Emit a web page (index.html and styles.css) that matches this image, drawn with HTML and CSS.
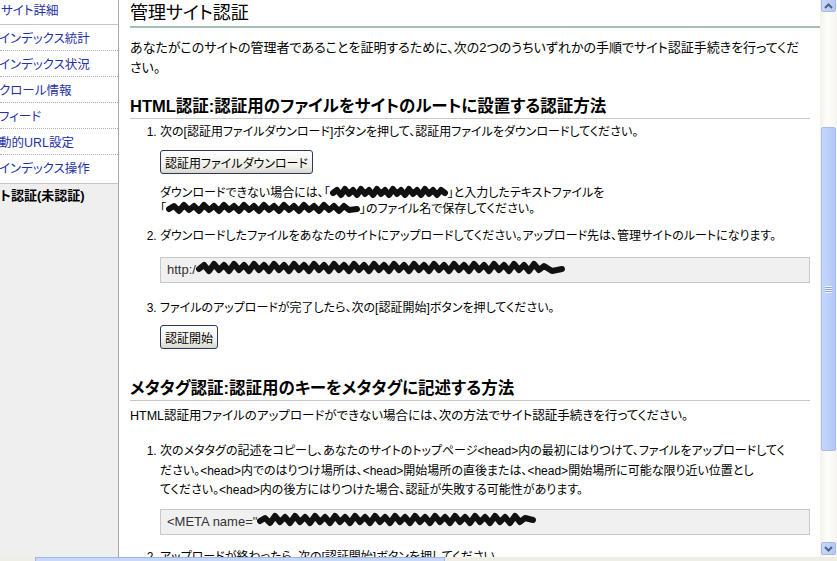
FILE: index.html
```html
<!DOCTYPE html>
<html lang="ja">
<head>
    <meta charset="UTF-8">
    <title>管理サイト認証</title>
    <link rel="stylesheet" href="styles.css">
</head>
<body>
    <div class="window">
        <div class="viewport">
            <aside class="sidebar">
                <ul class="nav">
                    <li class="nav-item first"><a href="#">サイト詳細</a></li>
                    <li class="nav-item"><a href="#">インデックス統計</a></li>
                    <li class="nav-item"><a href="#">インデックス状況</a></li>
                    <li class="nav-item"><a href="#">クロール情報</a></li>
                    <li class="nav-item"><a href="#">フィード</a></li>
                    <li class="nav-item"><a href="#">動的URL設定</a></li>
                    <li class="nav-item last"><a href="#">インデックス操作</a></li>
                    <li class="nav-item current">ト認証(未認証)</li>
                </ul>
            </aside>

            <main class="content">
                <h1 class="page-title">管理サイト認証</h1>
                <p class="intro">あなたがこのサイトの管理者であることを証明するために、次の2つのうちいずれかの手順でサイト認証手続きを行ってください。</p>

                <section class="method">
                    <h2 class="method-title">HTML認証:認証用のファイルをサイトのルートに設置する認証方法</h2>
                    <ol class="steps html-steps">
                        <li class="step">
                            次の[認証用ファイルダウンロード]ボタンを押して、認証用ファイルをダウンロードしてください。
                            <div class="step-action"><button class="xp-button">認証用ファイルダウンロード</button></div>
                            <p class="note">ダウンロードできない場合には、「<svg class="scribble" width="118" height="14" viewBox="0 0 118 14"><path d="M3 8 L7 5 L11 10 L15 4 L19 9 L23 5 L27 10 L31 4 L35 9 L39 5 L43 10 L47 4 L51 9 L55 5 L59 10 L63 4 L67 9 L71 5 L75 10 L79 4 L83 9 L87 5 L91 10 L95 4 L99 9 L103 5 L107 10 L111 5 L115 8" /></svg>」と入力したテキストファイルを<br>「<svg class="scribble" width="194" height="14" viewBox="0 0 194 14"><path d="M3 8 L8 5 L13 10 L18 4 L23 9 L28 5 L33 10 L38 4 L43 9 L48 5 L53 10 L58 4 L63 9 L68 5 L73 10 L78 4 L83 9 L88 5 L93 10 L98 4 L103 9 L108 5 L113 10 L118 4 L123 9 L128 5 L133 10 L138 4 L143 9 L148 5 L153 10 L158 4 L163 9 L168 5 L173 10 L178 5 L183 9 L191 8" /></svg>」のファイル名で保存してください。</p>
                        </li>
                        <li class="step">
                            ダウンロードしたファイルをあなたのサイトにアップロードしてください。アップロード先は、管理サイトのルートになります。
                            <div class="code-box">http:/<svg class="scribble" width="370" height="16" viewBox="0 0 370 16"><path d="M3 9 L8 5 L13 11 L18 4 L23 10 L28 5 L33 11 L38 4 L43 10 L48 5 L53 11 L58 4 L63 10 L68 5 L73 11 L78 4 L83 10 L88 5 L93 11 L98 4 L103 10 L108 5 L113 11 L118 4 L123 10 L128 5 L133 11 L138 4 L143 10 L148 5 L153 11 L158 4 L163 10 L168 5 L173 11 L178 4 L183 10 L188 5 L193 11 L198 4 L203 10 L208 5 L213 11 L218 4 L223 10 L228 5 L233 11 L238 4 L243 10 L248 5 L253 11 L258 4 L263 10 L268 5 L273 11 L278 4 L283 10 L288 5 L293 11 L298 4 L303 10 L308 5 L313 11 L318 4 L323 10 L328 5 L333 11 L338 4 L343 10 L348 6 L356 11 L366 9" /></svg></div>
                        </li>
                        <li class="step step-last">
                            ファイルのアップロードが完了したら、次の[認証開始]ボタンを押してください。
                            <div class="step-action tight"><button class="xp-button">認証開始</button></div>
                        </li>
                    </ol>
                </section>

                <section class="method">
                    <h2 class="method-title meta">メタタグ認証:認証用のキーをメタタグに記述する方法</h2>
                    <p class="lead">HTML認証用ファイルのアップロードができない場合には、次の方法でサイト認証手続きを行ってください。</p>
                    <ol class="steps meta-steps">
                        <li class="step long">
                            <p class="step-text">次のメタタグの記述をコピーし、あなたのサイトのトップページ&lt;head&gt;内の最初にはりつけて、ファイルをアップロードしてください。&lt;head&gt;内でのはりつけ場所は、&lt;head&gt;開始場所の直後または、&lt;head&gt;開始場所に可能な限り近い位置とし<br>てください。&lt;head&gt;内の後方にはりつけた場合、認証が失敗する可能性があります。</p>
                            <div class="code-box meta-box">&lt;META name="<svg class="scribble" width="280" height="16" viewBox="0 0 280 16"><path d="M3 9 L8 6 L13 11 L18 4 L23 10 L28 5 L33 11 L38 4 L43 10 L48 5 L53 11 L58 4 L63 10 L68 5 L73 11 L78 4 L83 10 L88 5 L93 11 L98 4 L103 10 L108 5 L113 11 L118 4 L123 10 L128 5 L133 11 L138 4 L143 10 L148 5 L153 11 L158 4 L163 10 L168 5 L173 11 L178 4 L183 10 L188 5 L193 11 L198 4 L203 10 L208 5 L213 11 L218 4 L223 10 L228 5 L233 11 L238 4 L243 10 L248 5 L253 11 L258 4 L263 10 L268 6 L276 8" /></svg></div>
                        </li>
                        <li class="step">アップロードが終わったら、次の[認証開始]ボタンを押してください。</li>
                    </ol>
                </section>
            </main>

            <div class="vscroll">
                <div class="arrow up"><svg width="9" height="6" viewBox="0 0 9 6"><path d="M1 5 L4.5 1.5 L8 5" /></svg></div>
                <div class="track">
                    <div class="thumb"><span class="grip"></span></div>
                </div>
                <div class="arrow down"><svg width="9" height="6" viewBox="0 0 9 6"><path d="M1 1 L4.5 4.5 L8 1" /></svg></div>
            </div>
        </div>
        <div class="hscroll"><div class="hthumb"></div></div>
    </div>
</body>
</html>
```

FILE: styles.css
```css
* {
    margin: 0;
    padding: 0;
    box-sizing: border-box;
}

body {
    width: 837px;
    height: 561px;
    overflow: hidden;
    background: #ffffff;
    color: #000000;
    font-family: "Liberation Sans", "Noto Sans CJK JP", sans-serif;
    font-size: 13px;
    font-feature-settings: "palt";
}

.window {
    display: flex;
    flex-direction: column;
    height: 561px;
}

.viewport {
    display: flex;
    height: 557px;
    overflow: hidden;
}

/* left navigation */
.sidebar {
    width: 119px;
    flex: none;
    background: #efefef;
    border-right: 1px solid #a8a8a8;
    overflow: hidden;
    font-size: 12.5px;
}

.nav {
    list-style: none;
}

.nav-item {
    background: #ffffff;
    height: 26px;
    line-height: 18px;
    padding-top: 5px;
    border-bottom: 1px dotted #b0b0b0;
    white-space: nowrap;
    text-indent: -1px;
}

.nav-item.first {
    height: 25px;
    padding-top: 2px;
    text-indent: 1px;
    border-bottom: 1px solid #c4c4c4;
}

.nav-item.last {
    height: 28px;
    border-bottom: none;
}

.nav-item a {
    color: #2530a8;
    text-decoration: none;
}

.nav-item.current {
    background: #efefef;
    border-top: 1px solid #c4c4c4;
    border-bottom: none;
    font-weight: bold;
    font-size: 13px;
    padding-top: 3px;
    text-indent: 0;
}

/* main content */
.content {
    flex: 1;
    padding-left: 11px;
    overflow: hidden;
}

.page-title {
    font-size: 18px;
    font-weight: normal;
    line-height: 24px;
    padding-top: 1px;
    padding-bottom: 1px;
    border-bottom: 2px solid #a9bfb6;
}

.intro {
    margin-top: 10px;
    margin-right: 16px;
    line-height: 20px;
}

.method {
    margin-right: 10px;
}

.method-title {
    font-size: 16.5px;
    font-weight: bold;
    line-height: 22px;
    margin-top: 17px;
    padding-bottom: 1px;
    border-bottom: 1px solid #c8c8c8;
}

.method-title.meta {
    margin-top: 28px;
}

.steps {
    padding-left: 30px;
}

.step {
    font-size: 12px;
    line-height: 18px;
    margin-top: 10px;
}

.html-steps {
    margin-top: 4px;
}

.html-steps .step:first-child {
    margin-top: 0;
}

.step-last {
    margin-top: 16px;
}

.step-action {
    margin-top: 9px;
}

.step-action.tight {
    margin-top: 8px;
}

.xp-button {
    font-family: inherit;
    font-size: 12px;
    font-feature-settings: "palt";
    height: 24px;
    padding: 0 4px;
    color: #000000;
    background: linear-gradient(#ffffff, #f0efe8 70%, #d8d6cc);
    border: 1px solid #2a3a5c;
    border-radius: 3px;
}

.note {
    margin-top: 11px;
    line-height: 16px;
}

.scribble {
    vertical-align: -2px;
}

.scribble path {
    fill: none;
    stroke: #111111;
    stroke-width: 6;
    stroke-linejoin: round;
    stroke-linecap: round;
}

.code-box {
    margin-top: 12px;
    height: 26px;
    line-height: 24px;
    padding-left: 6px;
    font-size: 13px;
    background: #f0f0f0;
    border: 1px solid #c8c8c8;
    color: #333333;
    white-space: nowrap;
    overflow: hidden;
}

.meta-box {
    margin-top: 8px;
}

.lead {
    margin-top: 6px;
    font-size: 12.5px;
    line-height: 18px;
}

.meta-steps {
    margin-top: 17px;
}

.meta-steps .step:first-child {
    margin-top: 0;
}

.step.long {
    line-height: 19.5px;
}

.step-text {
    margin-right: 14px;
}

.meta-steps .step {
    margin-top: 13px;
}

/* scrollbars */
.vscroll {
    width: 17px;
    flex: none;
    display: flex;
    flex-direction: column;
    background: linear-gradient(90deg, #f3f1ea, #fdfdfb 40%, #f6f5f0);
}

.arrow {
    height: 13px;
    margin: 0 1px;
    display: flex;
    align-items: center;
    justify-content: center;
    background: linear-gradient(90deg, #c9d8fb, #b4c8f5);
    border: 1px solid #a4b9e8;
    border-radius: 2px;
}

.arrow.up {
    margin-top: -1px;
}

.arrow.down {
    margin-bottom: 2px;
}

.arrow path {
    fill: none;
    stroke: #4d6185;
    stroke-width: 2;
}

.track {
    flex: 1;
    padding-top: 115px;
    padding-bottom: 91px;
}

.thumb {
    height: 100%;
    margin: 0 1px;
    display: flex;
    align-items: center;
    justify-content: center;
    background: linear-gradient(90deg, #c6d6fc, #bcd0fb 50%, #b3c8f7);
    border: 1px solid #a6bcec;
    border-radius: 2px;
}

.grip {
    width: 7px;
    height: 7px;
    background: repeating-linear-gradient(#eef3ff 0 1px, #8ea6d8 1px 2px);
}

.hscroll {
    height: 4px;
    display: flex;
    background: #eeede6;
    padding-left: 35px;
    padding-right: 392px;
}

.hthumb {
    flex: 1;
    background: #c8d8fa;
    border-top: 1px solid #9fb6e6;
    border-left: 1px solid #9fb6e6;
    border-right: 1px solid #9fb6e6;
}
```
